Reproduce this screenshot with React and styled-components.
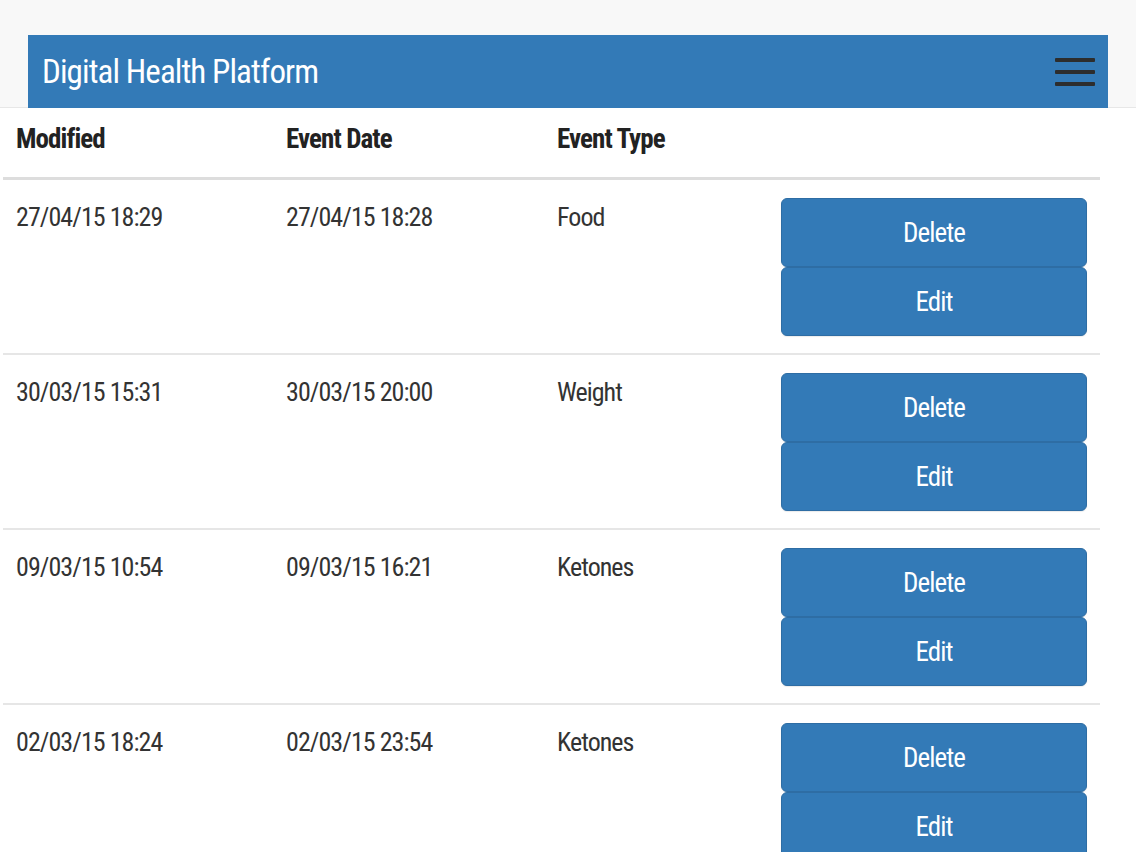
import React from 'react'
import styled, { createGlobalStyle } from 'styled-components'

const GlobalStyle = createGlobalStyle`
  html, body {
    margin: 0;
    padding: 0;
    background: #ffffff;
  }
  body {
    font-family: "Roboto Condensed", "Liberation Sans", Arial, sans-serif;
    color: #333333;
  }
`

// Header
const TopBar = styled.header`
  height: 108px;
  padding: 35px 28px 0 28px;
  box-sizing: border-box;
  background: #f8f8f8;
  border-bottom: 1px solid #e7e7e7;
`
const Brand = styled.div`
  height: 73px;
  background: #337ab7;
  display: flex;
  align-items: center;
  justify-content: space-between;
  padding: 0 14px 0 14px;
`
const BrandTitle = styled.div`
  color: #ffffff;
  font-size: 33px;
  letter-spacing: -0.9px;
  line-height: 1;
`
const MenuToggle = styled.button`
  display: flex;
  flex-direction: column;
  gap: 8px;
  width: 40px;
  padding: 0;
  margin-right: -1px;
  border: 0;
  background: transparent;
  span {
    display: block;
    height: 4px;
    border-radius: 1px;
    background: #2d2d2d;
  }
`

// Table
const Table = styled.div`
  width: 1097px;
  margin-left: 3px;
`
const Row = styled.div`
  display: grid;
  grid-template-columns: 270px 271px 224px 1fr;
  border-bottom: ${p => (p.head ? '3px solid #dddddd' : '2px solid #e6e6e6')};
  padding: ${p => (p.head ? '15px 0 22px' : '18px 0 17px')};
`
const Cell = styled.div`
  padding: ${p => (p.head ? '0 13px' : '3px 13px 0')};
  font-size: ${p => (p.head ? '27px' : '26px')};
  letter-spacing: ${p => (p.head ? '-0.9px' : '-0.95px')};
  line-height: 32px;
  font-weight: ${p => (p.head ? 700 : 400)};
  color: ${p => (p.head ? '#222222' : '#333333')};
  white-space: nowrap;
`
const Actions = styled.div`
  padding: 0 13px;
  display: flex;
  flex-direction: column;
`
const ActionButton = styled.button`
  height: 69px;
  width: 100%;
  padding-top: 2px;
  background: #337ab7;
  border: 1px solid #2e6da4;
  border-radius: 6px;
  color: #ffffff;
  font-family: "Roboto Condensed", "Liberation Sans", Arial, sans-serif;
  font-size: 27px;
  letter-spacing: -0.9px;
  cursor: pointer;
  box-shadow: 0 1px 1px rgba(0, 0, 0, 0.08);
`

const events = [
  { modified: '27/04/15 18:29', date: '27/04/15 18:28', type: 'Food' },
  { modified: '30/03/15 15:31', date: '30/03/15 20:00', type: 'Weight' },
  { modified: '09/03/15 10:54', date: '09/03/15 16:21', type: 'Ketones' },
  { modified: '02/03/15 18:24', date: '02/03/15 23:54', type: 'Ketones' },
]

export default function App() {
  return (
    <>
      <GlobalStyle />
      <TopBar>
        <Brand>
          <BrandTitle>Digital Health Platform</BrandTitle>
          <MenuToggle aria-label="Menu">
            <span />
            <span />
            <span />
          </MenuToggle>
        </Brand>
      </TopBar>
      <Table>
        <Row head>
          <Cell head>Modified</Cell>
          <Cell head>Event Date</Cell>
          <Cell head>Event Type</Cell>
          <Cell head />
        </Row>
        {events.map((e, i) => (
          <Row key={i}>
            <Cell>{e.modified}</Cell>
            <Cell>{e.date}</Cell>
            <Cell>{e.type}</Cell>
            <Actions>
              <ActionButton>Delete</ActionButton>
              <ActionButton>Edit</ActionButton>
            </Actions>
          </Row>
        ))}
      </Table>
    </>
  )
}
